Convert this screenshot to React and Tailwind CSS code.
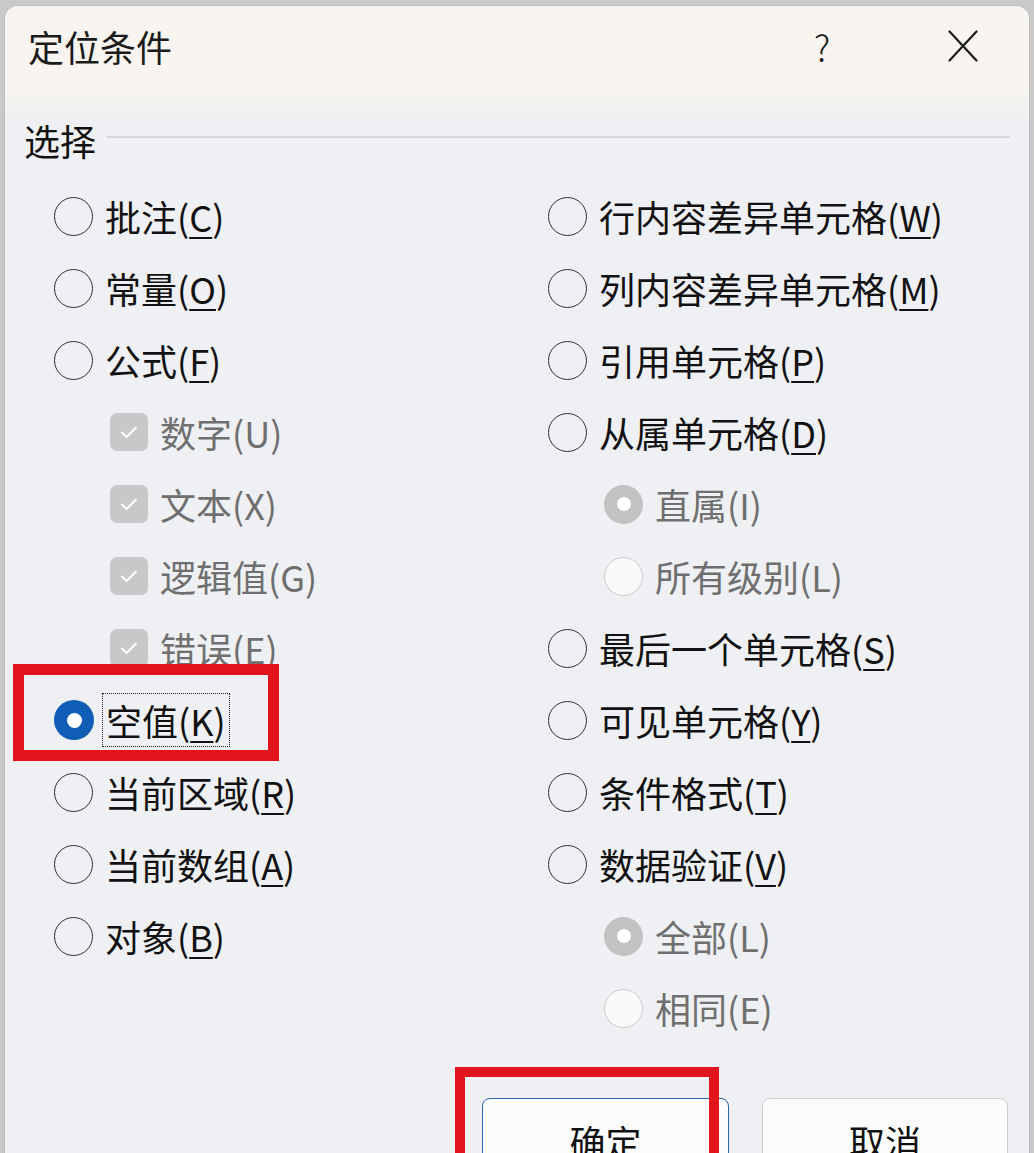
import React from "react";

const FONT = { fontFamily: '"Noto Sans CJK SC", "Noto Sans", sans-serif' };

function Radio({ variant }) {
  if (variant === "on")
    return (
      <span className="w-[40px] h-[40px] rounded-full bg-[#0f5db5] flex items-center justify-center shrink-0">
        <span className="w-[15px] h-[15px] rounded-full bg-white" />
      </span>
    );
  if (variant === "disOn")
    return (
      <span className="w-[39px] h-[39px] rounded-full bg-[#c2c2c2] flex items-center justify-center shrink-0">
        <span className="w-[14px] h-[14px] rounded-full bg-white" />
      </span>
    );
  if (variant === "disOff")
    return <span className="w-[39px] h-[39px] rounded-full border-[1.5px] border-[#c9c9c9] bg-[#fafafa] shrink-0" />;
  return <span className="w-[39px] h-[39px] rounded-full border-[1.5px] border-[#333333] shrink-0" />;
}

function Check() {
  return (
    <span className="w-[38px] h-[38px] rounded-[7px] bg-[#c8c8c8] flex items-center justify-center shrink-0">
      <svg width="38" height="38" viewBox="0 0 38 38">
        <path d="M12 19.5 L16.5 24 L26 14.5" fill="none" stroke="#ffffff" strokeWidth="1.8" strokeLinecap="round" strokeLinejoin="round" />
      </svg>
    </span>
  );
}

function Label({ text, k, disabled }) {
  return (
    <span className={disabled ? "text-[#6f6f6f]" : "text-[#111111]"}>
      {text}(
      {k && !disabled ? (
        <span className="underline underline-offset-[5px] decoration-[2px]">{k}</span>
      ) : (
        k
      )}
      )
    </span>
  );
}

function Row({ kind, variant, text, k, sub, disabled, children }) {
  return (
    <div className={"relative h-[72px] flex items-center " + (sub ? "pl-[56px]" : "")}>
      {kind === "check" ? <Check /> : <Radio variant={variant} />}
      <span className="ml-[12px] text-[36px] leading-none whitespace-nowrap">
        <Label text={text} k={k} disabled={disabled} />
      </span>
      {children}
    </div>
  );
}

export default function App() {
  return (
    <div className="w-[1034px] h-[1153px] overflow-hidden bg-[#c9c9c9] pt-[5px] pl-[4px]" style={FONT}>
      <div className="w-[1026px] h-[1200px] rounded-t-[14px] bg-[#eef0f3] border border-[#bdbdbd] overflow-hidden">
        {/* title area */}
        <div className="h-[114px] bg-linear-to-b from-[#f8f4ef] from-[72%] to-[#eef0f3]">
          <div className="h-[80px] flex items-center pl-[23px] pr-[51px] text-[#1a1a1a]">
            <span className="text-[36px] leading-none">定位条件</span>
            <span className="ml-auto w-[20px] text-center text-[36px] leading-none font-light">?</span>
            <svg className="ml-[116px]" width="30" height="32" viewBox="0 0 30 32">
              <path d="M1.5 1.5 L28.5 30.5 M28.5 1.5 L1.5 30.5" stroke="#1a1a1a" strokeWidth="2.2" strokeLinecap="round" />
            </svg>
          </div>
        </div>

        {/* group header */}
        <div className="h-[40px] flex items-center pl-[19px] pr-[19px]">
          <span className="text-[36px] leading-none text-[#111111]">选择</span>
          <span className="flex-1 h-[1.5px] bg-[#d5d7da] ml-[11px] mb-[6px]" />
        </div>

        {/* options */}
        <div className="mt-[20px] pl-[49px] grid grid-cols-[494px_1fr]">
          <div className="flex flex-col">
            <Row text="批注" k="C" />
            <Row text="常量" k="O" />
            <Row text="公式" k="F" />
            <Row kind="check" sub disabled text="数字" k="U" />
            <Row kind="check" sub disabled text="文本" k="X" />
            <Row kind="check" sub disabled text="逻辑值" k="G" />
            <Row kind="check" sub disabled text="错误" k="E" />
            <div className="relative h-[72px] flex items-center">
              <Radio variant="on" />
              <span className="ml-[8px] border border-dotted border-[#222222] px-[3px] py-[8px] text-[36px] leading-none whitespace-nowrap">
                <Label text="空值" k="K" />
              </span>
              <span className="absolute left-[-41px] top-[-20px] w-[266px] h-[97px] border-[11px] border-[#e2151c]" />
            </div>
            <Row text="当前区域" k="R" />
            <Row text="当前数组" k="A" />
            <Row text="对象" k="B" />
          </div>
          <div className="flex flex-col">
            <Row text="行内容差异单元格" k="W" />
            <Row text="列内容差异单元格" k="M" />
            <Row text="引用单元格" k="P" />
            <Row text="从属单元格" k="D" />
            <Row sub variant="disOn" disabled text="直属" k="I" />
            <Row sub variant="disOff" disabled text="所有级别" k="L" />
            <Row text="最后一个单元格" k="S" />
            <Row text="可见单元格" k="Y" />
            <Row text="条件格式" k="T" />
            <Row text="数据验证" k="V" />
            <Row sub variant="disOn" disabled text="全部" k="L" />
            <Row sub variant="disOff" disabled text="相同" k="E" />
          </div>
        </div>

        {/* buttons */}
        <div className="mt-[54px] flex justify-end pr-[21px] gap-[33px]">
          <div className="relative">
            <button className="w-[247px] h-[78px] rounded-[8px] border-[1.5px] border-[#2a66b0] bg-[#fcfcfd] text-[36px] leading-none text-[#111111] flex items-start justify-center pt-[24px]">
              确定
            </button>
            <span className="absolute left-[-27px] top-[-31px] w-[264px] h-[140px] border-[10px] border-[#e2151c]" />
          </div>
          <button className="w-[246px] h-[78px] rounded-[8px] border-[1.5px] border-[#cfcfcf] bg-[#fbfbfc] text-[36px] leading-none text-[#111111] flex items-start justify-center pt-[24px]">
            取消
          </button>
        </div>
      </div>
    </div>
  );
}
